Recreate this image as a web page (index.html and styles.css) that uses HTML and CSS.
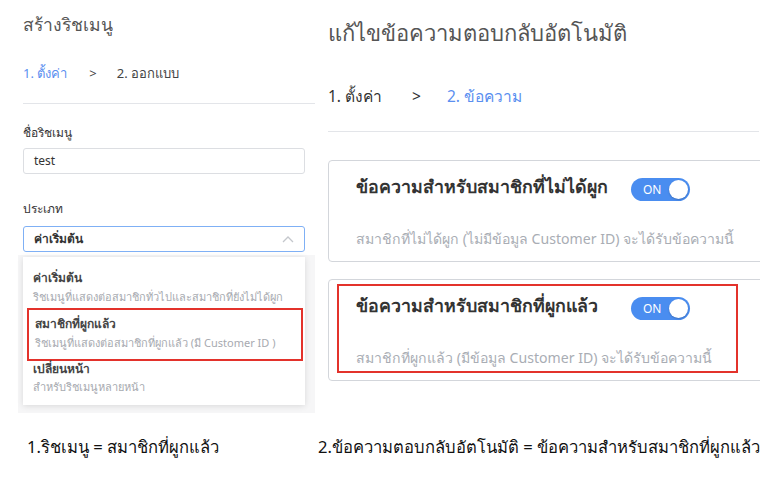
FILE: index.html
```html
<!DOCTYPE html>
<html lang="th">
<head>
  <meta charset="UTF-8" />
  <title>ริชเมนู และ ข้อความตอบกลับอัตโนมัติ</title>
  <link rel="stylesheet" href="styles.css">
</head>
<body>
  <div class="shots">
    <div class="left">
      <h1 class="title-sm">สร้างริชเมนู</h1>
      <div class="steps steps-sm">
        <span class="step active">1. ตั้งค่า</span>
        <span class="sep">&gt;</span>
        <span class="step">2. ออกแบบ</span>
      </div>
      <hr class="divider">

      <label class="label">ชื่อริชเมนู</label>
      <div class="input">test</div>

      <label class="label">ประเภท</label>
      <div class="select">
        <span>ค่าเริ่มต้น</span>
        <svg class="chev" width="12" height="8" viewBox="0 0 12 8"><path d="M1 7 L6 2 L11 7" fill="none" stroke="#c4c7cc" stroke-width="1.3"/></svg>
      </div>

      <div class="drop-bg">
        <div class="dropdown">
          <div class="opt">
            <div class="opt-name">ค่าเริ่มต้น</div>
            <div class="opt-desc">ริชเมนูที่แสดงต่อสมาชิกทั่วไปและสมาชิกที่ยังไม่ได้ผูก</div>
          </div>
          <div class="opt marked">
            <div class="opt-name">สมาชิกที่ผูกแล้ว</div>
            <div class="opt-desc">ริชเมนูที่แสดงต่อสมาชิกที่ผูกแล้ว (มี Customer ID )</div>
          </div>
          <div class="opt">
            <div class="opt-name">เปลี่ยนหน้า</div>
            <div class="opt-desc">สำหรับริชเมนูหลายหน้า</div>
          </div>
        </div>
      </div>
    </div>

    <div class="right">
      <h1 class="title-lg">แก้ไขข้อความตอบกลับอัตโนมัติ</h1>
      <div class="steps steps-lg">
        <span class="step">1. ตั้งค่า</span>
        <span class="sep">&gt;</span>
        <span class="step active">2. ข้อความ</span>
      </div>
      <hr class="divider">

      <div class="card">
        <div class="card-head">
          <div class="card-title">ข้อความสำหรับสมาชิกที่ไม่ได้ผูก</div>
          <div class="toggle"><span>ON</span><i class="knob"></i></div>
        </div>
        <div class="card-desc">สมาชิกที่ไม่ได้ผูก (ไม่มีข้อมูล Customer ID) จะได้รับข้อความนี้</div>
      </div>

      <div class="card">
        <div class="card-head">
          <div class="card-title">ข้อความสำหรับสมาชิกที่ผูกแล้ว</div>
          <div class="toggle"><span>ON</span><i class="knob"></i></div>
        </div>
        <div class="card-desc">สมาชิกที่ผูกแล้ว (มีข้อมูล Customer ID) จะได้รับข้อความนี้</div>
        <div class="mark"></div>
      </div>
    </div>
  </div>

  <div class="captions">
    <p class="cap cap-1">1.ริชเมนู = สมาชิกที่ผูกแล้ว</p>
    <p class="cap cap-2">2.ข้อความตอบกลับอัตโนมัติ = ข้อความสำหรับสมาชิกที่ผูกแล้ว</p>
  </div>
</body>
</html>
```

FILE: styles.css
```css
body {
  margin: 0;
  background: #fff;
  color: #333;
  font-family: "Noto Sans", "DejaVu Sans", sans-serif;
}

.shots {
  display: flex;
  height: 414px;
}

/* left screenshot */
.left {
  width: 292px;
  padding-left: 23px;
}

.title-sm {
  margin: 0;
  padding-top: 10px;
  font-size: 17.5px;
  line-height: 28px;
  font-weight: normal;
  color: #555;
}

.steps {
  display: flex;
  align-items: center;
}

.steps-sm {
  margin-top: 24px;
  height: 22px;
  font-size: 13px;
  color: #444;
}

.steps-sm .sep {
  margin: 0 20px 0 22px;
}

.step.active {
  color: #5b8ff0;
}

.divider {
  margin: 0;
  border: none;
  border-top: 1px solid #e3e5e9;
}

.steps-sm + .divider {
  margin-top: 19px;
}

.label {
  display: block;
  margin-top: 20px;
  font-size: 12px;
  line-height: 18px;
  color: #333;
}

.input,
.select {
  box-sizing: border-box;
  width: 282px;
  height: 26px;
  margin-top: 6px;
  padding: 0 10px;
  border: 1px solid #dcdee2;
  border-radius: 3px;
  font-size: 12px;
  line-height: 24px;
  color: #333;
}

.input + .label {
  margin-top: 26px;
}

.select {
  display: flex;
  justify-content: space-between;
  align-items: center;
  margin-top: 8px;
  border-color: #7fb0f5;
  font-weight: 600;
}

.drop-bg {
  margin: 3px 0 0 -5px;
  width: 292px;
  height: 156px;
  padding: 2px 0 0 5px;
  background: #f6f6f7;
}

.dropdown {
  width: 282px;
  padding: 9px 0 8px;
  background: #fff;
  box-shadow: 0 1px 6px rgba(0, 0, 0, 0.12);
}

.opt {
  padding: 3px 10px 1px;
}

.opt.marked {
  margin: 1px 2px 0 4px;
  padding: 5px 6px 7px;
  border: 2px solid #e3322b;
}

.opt.marked + .opt {
  padding-top: 0;
}

.opt-name {
  font-size: 12px;
  line-height: 18px;
  font-weight: 600;
  color: #444;
}

.opt.marked + .opt .opt-name {
  line-height: 16px;
}

.opt-desc {
  font-size: 11px;
  line-height: 19px;
  color: #a7aab0;
  white-space: nowrap;
}

/* right screenshot */
.right {
  width: 432px;
  margin-left: 13px;
  overflow: hidden;
}

.title-lg {
  margin: 0;
  padding-top: 17px;
  font-size: 22px;
  line-height: 30px;
  font-weight: normal;
  color: #555;
}

.steps-lg {
  margin-top: 37px;
  height: 24px;
  font-size: 15.5px;
  color: #333;
}

.steps-lg .sep {
  margin: 0 26px 0 30px;
}

.steps-lg + .divider {
  width: 431px;
  margin-top: 23px;
}

.card {
  position: relative;
  box-sizing: border-box;
  width: 450px;
  height: 102px;
  margin-top: 28px;
  padding: 16px 0 0 27px;
  border: 1px solid #d3d6db;
  border-radius: 4px;
}

.card + .card {
  margin-top: 17px;
}

.card-head {
  display: grid;
  grid-template-columns: 275px auto;
  align-items: center;
  height: 24px;
}

.card-title {
  margin-top: -4px;
  font-size: 17.8px;
  font-weight: 600;
  color: #333;
  white-space: nowrap;
}

.toggle {
  display: flex;
  justify-content: space-between;
  align-items: center;
  width: 59px;
  height: 23px;
  box-sizing: border-box;
  padding: 0 2px 0 12px;
  border-radius: 12px;
  background: #4a8df0;
  color: #fff;
  font-size: 12px;
}

.knob {
  width: 19px;
  height: 19px;
  border-radius: 50%;
  background: #fff;
  box-shadow: 0 1px 2px rgba(0, 0, 0, 0.2);
}

.card-desc {
  margin-top: 27px;
  font-size: 14.1px;
  color: #a9adb4;
  white-space: nowrap;
}

.mark {
  position: absolute;
  left: 8px;
  top: 4px;
  width: 397px;
  height: 85px;
  border: 2px solid #e3322b;
}

/* captions */
.captions {
  display: flex;
  padding-top: 21px;
}

.cap {
  margin: 0;
  font-size: 16.6px;
  line-height: 24px;
  color: #111;
}

.cap-1 {
  width: 291px;
  padding-left: 27px;
}
```
